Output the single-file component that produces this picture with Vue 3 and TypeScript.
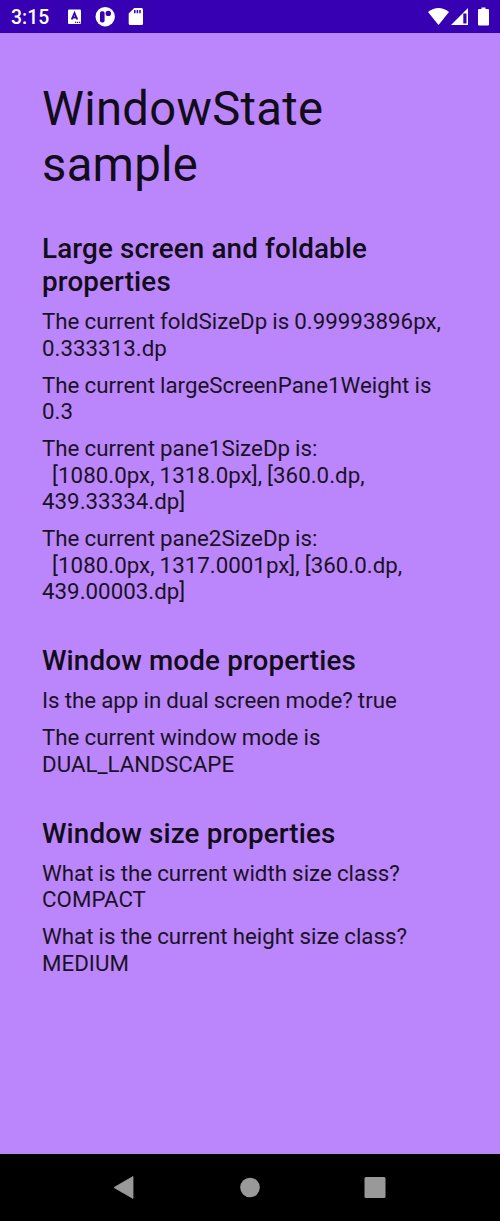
<script setup lang="ts">
interface Section { title: string; lines: string[] }
const sections: Section[] = [
  { title: 'Large screen and foldable\nproperties', lines: [
    'The current foldSizeDp is 0.99993896px,\n0.333313.dp',
    'The current largeScreenPane1Weight is\n0.3',
    'The current pane1SizeDp is:\n  [1080.0px, 1318.0px], [360.0.dp,\n439.33334.dp]',
    'The current pane2SizeDp is:\n  [1080.0px, 1317.0001px], [360.0.dp,\n439.00003.dp]',
  ] },
  { title: 'Window mode properties', lines: [
    'Is the app in dual screen mode? true',
    'The current window mode is\nDUAL_LANDSCAPE',
  ] },
  { title: 'Window size properties', lines: [
    'What is the current width size class?\nCOMPACT',
    'What is the current height size class?\nMEDIUM',
  ] },
]
</script>

<template>
  <div class="screen">
    <header class="status">
      <span class="time">3:15</span>
      <svg class="left-icons" width="80" height="33" viewBox="67 0 80 33">
        <rect x="68" y="9.5" width="13" height="14.5" rx="1" fill="#fff" />
        <path d="M71.7 19.5 74.5 13 77.3 19.5M72.8 17.5h3.4" fill="none" stroke="#3700b3" stroke-width="1.8" />
        <path d="M75 22.3h1.2M77 22.3h1.2M79 22.3h1.2" stroke="#3700b3" stroke-width="1.2" />
        <circle cx="105.2" cy="16.7" r="9.7" fill="#fff" />
        <rect x="100" y="11.3" width="4.6" height="11.2" rx="1.8" fill="#3700b3" />
        <circle cx="108.3" cy="13.4" r="2.7" fill="#3700b3" />
        <path d="M134.3 8h7.2q1.5 0 1.5 1.5v14q0 1.5-1.5 1.5h-11.3q-1.5 0-1.5-1.5V13.5z" fill="#fff" />
        <path d="M134.8 10v3.3M137.4 10v3.3M140 10v3.3" stroke="#3700b3" stroke-width="1.5" />
      </svg>
      <svg class="right-icons" width="73" height="33" viewBox="427 0 73 33">
        <path d="M428 12Q438.5 4 449 12L438.5 25z" fill="#fff" />
        <path fill-rule="evenodd" d="M468 8v17H451zM463.3 13.5v10h3.2v-10z" fill="#fff" />
        <path d="M479 9h2.5V7.5h4V9h2.5q1 0 1 1v14.5q0 1-1 1h-9q-1 0-1-1V10q0-1 1-1z" fill="#fff" />
      </svg>
    </header>
    <main>
      <h1>WindowState<br />sample</h1>
      <section v-for="s in sections" :key="s.title">
        <h2>{{ s.title }}</h2>
        <p v-for="l in s.lines" :key="l">{{ l }}</p>
      </section>
    </main>
    <nav>
      <svg width="500" height="67" viewBox="0 0 500 67" fill="#999">
        <path d="M114 33.5 133 22.5v22z" stroke="#999" stroke-width=".8" stroke-linejoin="round" />
        <circle cx="250" cy="33.5" r="9.8" />
        <rect x="364.5" y="23" width="21" height="21" rx="1.5" />
      </svg>
    </nav>
  </div>
</template>

<style>
body { margin: 0; }
</style>
<style scoped>
.screen { width: 500px; height: 1221px; display: flex; flex-direction: column; background: #bb86fc; font-family: Roboto, sans-serif; color: #120d19; overflow: hidden; }
.status { height: 33px; flex: none; background: #3700b3; display: flex; align-items: center; color: #fff; }
.time { width: 56px; padding-left: 11px; font-size: 19.4px; font-weight: 500; line-height: 31px; padding-top: 2px; }
.right-icons { margin-left: auto; }
main { flex: 1; padding: 48px 42px 0; }
h1 { margin: 0; font-size: 47.2px; line-height: 56px; font-weight: 400; letter-spacing: .3px; }
section { margin-top: 39.3px; }
h2 { margin: 0 0 10.2px; font-size: 27.8px; line-height: 33px; font-weight: 500; letter-spacing: .14px; white-space: pre-wrap; }
p { margin: 0 0 10.6px; font-size: 22.3px; line-height: 26.45px; font-weight: 400; letter-spacing: .02px; word-spacing: -.5px; color: #1a1224; white-space: pre; }
nav { height: 67px; flex: none; background: #000; }
nav svg { display: block; }
</style>
